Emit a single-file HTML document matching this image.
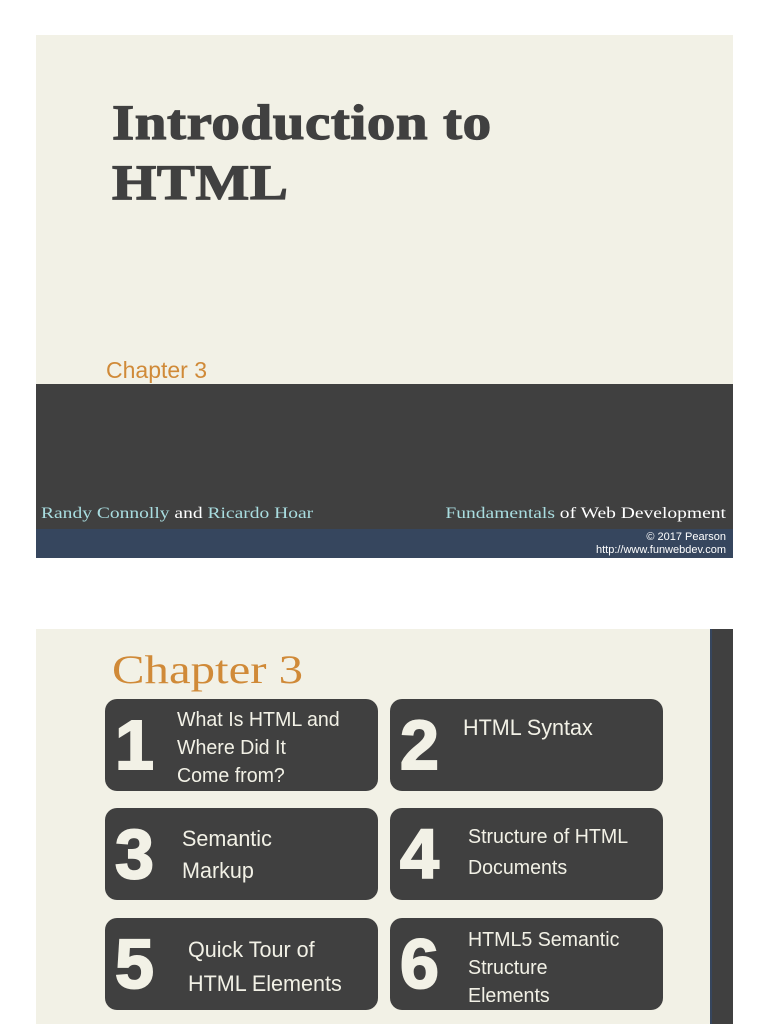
<!DOCTYPE html>
<html><head><meta charset="utf-8"><style>
body{margin:0;width:768px;height:1024px;background:#fff;position:relative;overflow:hidden;font-family:"Liberation Sans",sans-serif}
.a{position:absolute}
.s1{left:36px;top:35px;width:697px;height:523px;background:#f2f1e6}
.title{left:112px;top:92px;font-family:"Liberation Serif",serif;font-weight:bold;font-size:50px;line-height:60px;color:#404040;letter-spacing:0.5px;white-space:nowrap;transform:scaleX(1.14);transform-origin:left top;-webkit-text-stroke:1.2px #404040}
.ch{left:106px;top:357px;font-size:23px;color:#d08a38}
.band{left:36px;top:384px;width:697px;height:145px;background:#404040}
.blue{left:36px;top:529px;width:697px;height:29px;background:#36465e}
.serif{font-family:"Liberation Serif",serif;font-size:16px;color:#fff;white-space:nowrap;transform:scaleX(1.22)}
.cy{color:#a9dde0}
.small{font-size:11px;color:#fff;text-align:right;right:8px;width:200px;line-height:13px;left:auto}
.s2{left:36px;top:629px;width:697px;height:395px;background:#f2f1e6}
.side{left:710px;top:629px;width:23px;height:395px;background:#404040;border-left:2px solid #36465e;box-sizing:border-box}
.ch2{left:112px;top:646px;font-family:"Liberation Serif",serif;font-size:40px;color:#d08a38;transform:scaleX(1.22);transform-origin:left top}
.box{width:273px;height:92px;background:#404040;border-radius:12px;color:#f2f1e6}
.num{position:absolute;left:10px;top:6px;font-family:"Liberation Sans",sans-serif;font-weight:900;font-size:70px;line-height:80px;color:#f2f1e6;-webkit-text-stroke:2px #f2f1e6}
.txt{position:absolute;font-size:20px;line-height:28px;transform:scaleX(0.98);transform-origin:left top}
</style></head><body>
<div class="a s1"></div>
<div class="a title">Introduction to<br>HTML</div>
<div class="a ch">Chapter 3</div>
<div class="a band"></div>
<div class="a blue"></div>
<div class="a serif" style="left:41px;top:505px;transform-origin:left top"><span class="cy">Randy Connolly</span> and <span class="cy">Ricardo Hoar</span></div>
<div class="a serif" style="right:42px;top:505px;transform-origin:right top"><span class="cy">Fundamentals</span> of Web Development</div>
<div class="a small" style="top:531px;right:42px">© 2017 Pearson<br>http://www.funwebdev.com</div>

<div class="a s2"></div>
<div class="a side"></div>
<div class="a ch2">Chapter 3</div>

<div class="a box" style="left:105px;top:699px"><div class="num">1</div><div class="txt" style="left:72px;top:7px">What Is HTML and<br>Where Did It<br>Come from?</div></div>
<div class="a box" style="left:390px;top:699px"><div class="num">2</div><div class="txt" style="left:73px;top:15px;font-size:22px">HTML Syntax</div></div>
<div class="a box" style="left:105px;top:808px"><div class="num">3</div><div class="txt" style="left:77px;top:15px;font-size:22px;line-height:32px">Semantic<br>Markup</div></div>
<div class="a box" style="left:390px;top:808px"><div class="num">4</div><div class="txt" style="left:78px;top:14px;line-height:31px">Structure of HTML<br>Documents</div></div>
<div class="a box" style="left:105px;top:918px"><div class="num">5</div><div class="txt" style="left:83px;top:15px;font-size:22px;line-height:34px">Quick Tour of<br>HTML Elements</div></div>
<div class="a box" style="left:390px;top:918px"><div class="num">6</div><div class="txt" style="left:78px;top:8px">HTML5 Semantic<br>Structure<br>Elements</div></div>
</body></html>
